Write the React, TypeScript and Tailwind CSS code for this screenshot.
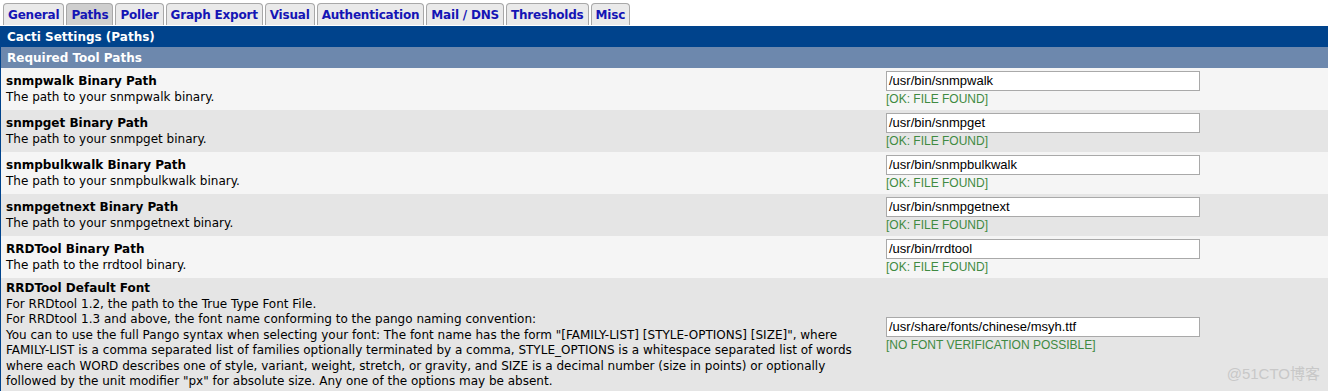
import React from 'react';

const tabs = ['General', 'Paths', 'Poller', 'Graph Export', 'Visual', 'Authentication', 'Mail / DNS', 'Thresholds', 'Misc'];

const rows = [
  { title: 'snmpwalk Binary Path', desc: ['The path to your snmpwalk binary.'], value: '/usr/bin/snmpwalk', status: '[OK: FILE FOUND]' },
  { title: 'snmpget Binary Path', desc: ['The path to your snmpget binary.'], value: '/usr/bin/snmpget', status: '[OK: FILE FOUND]' },
  { title: 'snmpbulkwalk Binary Path', desc: ['The path to your snmpbulkwalk binary.'], value: '/usr/bin/snmpbulkwalk', status: '[OK: FILE FOUND]' },
  { title: 'snmpgetnext Binary Path', desc: ['The path to your snmpgetnext binary.'], value: '/usr/bin/snmpgetnext', status: '[OK: FILE FOUND]' },
  { title: 'RRDTool Binary Path', desc: ['The path to the rrdtool binary.'], value: '/usr/bin/rrdtool', status: '[OK: FILE FOUND]' },
  {
    title: 'RRDTool Default Font',
    desc: [
      'For RRDtool 1.2, the path to the True Type Font File.',
      'For RRDtool 1.3 and above, the font name conforming to the pango naming convention:',
      'You can to use the full Pango syntax when selecting your font: The font name has the form "[FAMILY-LIST] [STYLE-OPTIONS] [SIZE]", where FAMILY-LIST is a comma separated list of families optionally terminated by a comma, STYLE_OPTIONS is a whitespace separated list of words where each WORD describes one of style, variant, weight, stretch, or gravity, and SIZE is a decimal number (size in points) or optionally followed by the unit modifier "px" for absolute size. Any one of the options may be absent.',
    ],
    value: '/usr/share/fonts/chinese/msyh.ttf',
    status: '[NO FONT VERIFICATION POSSIBLE]',
  },
];

export default function App() {
  return (
    <div className="relative h-[391px] w-[1328px] overflow-hidden bg-white font-['DejaVu_Sans',sans-serif] text-[12px]">
      <div className="flex gap-[2px] pl-[3px] pt-[3px]">
        {tabs.map(t => (
          <div
            key={t}
            className={`h-[22px] rounded-t-[4px] border border-b-0 border-[#a8a8a8] px-[4px] pt-[3px] text-[12px] font-bold leading-4 tracking-[-0.2px] text-[#1515b5] ${
              t === 'Paths' ? 'bg-[#cfcfcf]' : 'bg-[#eaeaea]'
            }`}
          >
            {t}
          </div>
        ))}
      </div>

      <div className="mt-[1px] border-l border-[#00438c]">
        <div className="h-[21px] bg-[#00438c] px-[6px] pt-[3px] text-[12px] font-bold leading-4 text-white">
          Cacti Settings (Paths)
        </div>
        <div className="h-[21px] bg-[#6d88ad] px-[6px] pt-[3px] text-[12px] font-bold leading-4 text-white">
          Required Tool Paths
        </div>

        {rows.map((r, i) => (
          <div
            key={r.title}
            className={`grid grid-cols-[880px_1fr] items-center ${i % 2 === 0 ? 'bg-[#f5f5f5]' : 'bg-[#e5e5e5]'}`}
          >
            <div className="pb-[2px] pt-[3px] pl-[5px] pr-[16px] text-[12px] leading-[15.5px] text-black">
              <div className="font-bold">{r.title}</div>
              {r.desc.map(d => (
                <div key={d}>{d}</div>
              ))}
            </div>
            <div className="flex flex-col justify-center py-[3px] pl-[5px]">
              <div className="h-[20px] w-[314px] border border-[#a9a9a9] bg-white px-[2px] font-['Liberation_Sans',Arial,sans-serif] text-[13px] leading-[18px] text-black">
                {r.value}
              </div>
              <div className="font-['Liberation_Sans',Arial,sans-serif] text-[12px] leading-4 text-[#3f8a42]">{r.status}</div>
            </div>
          </div>
        ))}
      </div>

      <div className="absolute bottom-[6px] right-[8px] font-['Liberation_Sans','Noto_Sans_CJK_SC',sans-serif] text-[15px] text-[#c8c8c8]">
        @51CTO博客
      </div>
    </div>
  );
}
